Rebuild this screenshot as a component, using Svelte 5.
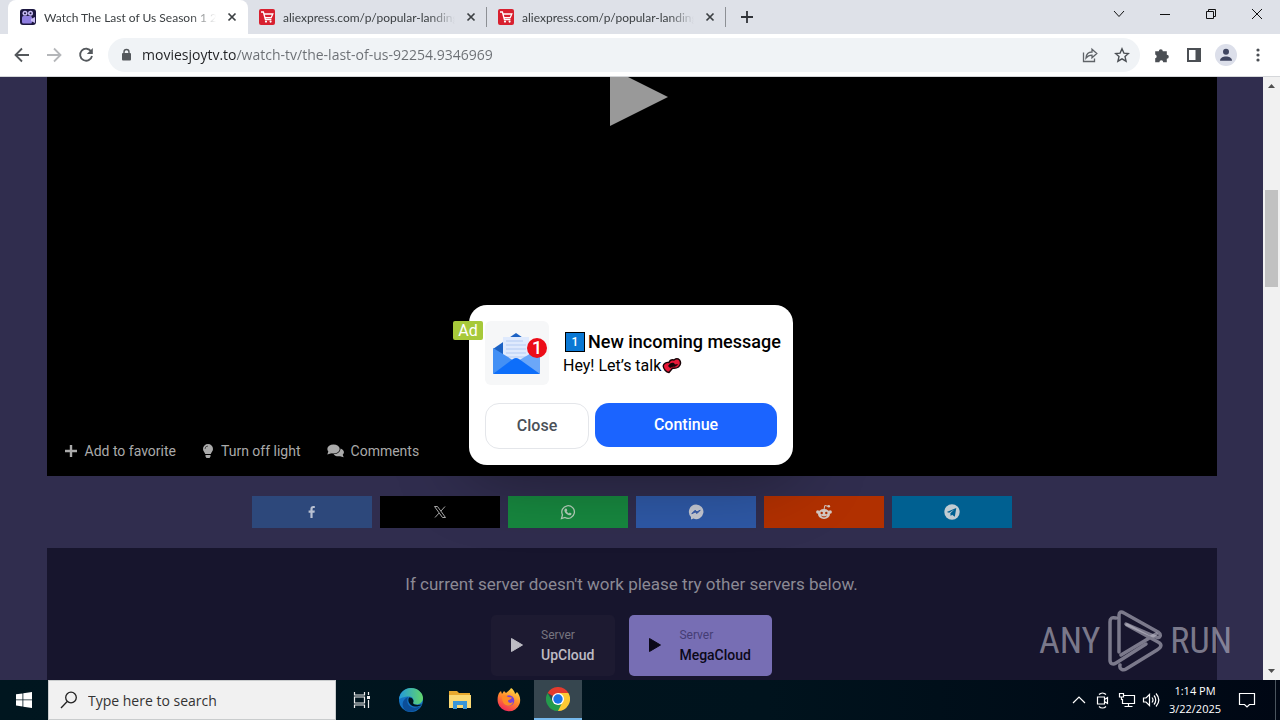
<script>
  const tabs = [
    { title: 'Watch The Last of Us Season 1 2023', icon: 'movie', active: true },
    { title: 'aliexpress.com/p/popular-landing', icon: 'cart', active: false },
    { title: 'aliexpress.com/p/popular-landing', icon: 'cart', active: false }
  ];
  const shares = ['facebook', 'x', 'whatsapp', 'messenger', 'reddit', 'telegram'];
  const servers = [
    { name: 'UpCloud', active: false },
    { name: 'MegaCloud', active: true }
  ];
  let url = 'moviesjoytv.to/watch-tv/the-last-of-us-92254.9346969';
</script>

<div class="screen">
  <header class="tabstrip">
    {#each tabs as tab}
      <div class="tab" class:active={tab.active}>
        {#if tab.icon === 'movie'}
          <svg class="fav" viewBox="0 0 16 16" aria-hidden="true">
            <rect width="16" height="16" rx="3" fill="#1c1740" />
            <circle cx="5" cy="4.200" r="2.500" fill="#c9bdf5" /><circle cx="10.500" cy="4.200" r="2.500" fill="#c9bdf5" />
            <circle cx="5" cy="4.200" r="1" fill="#1c1740" /><circle cx="10.500" cy="4.200" r="1" fill="#1c1740" />
            <rect x="2" y="7" width="10" height="7.500" rx="1.500" fill="#8f7ee0" />
            <path d="M11 10l4-2v6l-4-2z" fill="#c9bdf5" />
          </svg>
        {:else}
          <svg class="fav" viewBox="0 0 16 16" aria-hidden="true">
            <rect width="16" height="16" rx="2" fill="#d8202f" />
            <path d="M2 3h2.400l2 7.500h6M4.800 5h9l-1.600 3.700H6" fill="none" stroke="#fff" stroke-width="1.300" />
            <circle cx="7" cy="12.600" r="1.100" fill="#fff" /><circle cx="11.600" cy="12.600" r="1.100" fill="#fff" />
          </svg>
        {/if}
        <span class="title">{tab.title}</span>
        <button class="plain close" aria-label="Close tab">
          <svg width="16" height="16" viewBox="0 0 16 16"><path d="M4.500 4.500l7 7M11.500 4.500l-7 7" stroke="#3c4043" stroke-width="1.700" /></svg>
        </button>
      </div>
    {/each}
    <button class="plain newtab" aria-label="New tab">
      <svg width="16" height="16" viewBox="0 0 16 16"><path d="M8 2v12M2 8h12" stroke="#303338" stroke-width="1.800" /></svg>
    </button>
    <div class="winctl">
      <button class="plain" aria-label="Search tabs"><svg width="12" height="12" viewBox="0 0 12 12"><path d="M1 3l5 5.500L11 3" /></svg></button>
      <button class="plain" aria-label="Minimize"><svg width="12" height="12" viewBox="0 0 12 12"><path d="M1 6.500h10" /></svg></button>
      <button class="plain" aria-label="Restore"><svg width="12" height="12" viewBox="0 0 12 12"><path d="M1.500 3.500h7v7h-7zM3.500 3.500v-2h7v7h-2" /></svg></button>
      <button class="plain" aria-label="Close window"><svg width="12" height="12" viewBox="0 0 12 12"><path d="M1 1l10 10M11 1L1 11" /></svg></button>
    </div>
  </header>

  <nav class="toolbar">
    <div class="group">
      <button class="plain tool" aria-label="Back"><svg width="16" height="16" viewBox="0 0 16 16"><path d="M15 8H2M8 1.500L1.500 8 8 14.500" fill="none" stroke="#54585c" stroke-width="1.800" /></svg></button>
      <button class="plain tool" aria-label="Forward"><svg width="16" height="16" viewBox="0 0 16 16"><path d="M1 8h13M8 1.500L14.500 8 8 14.500" fill="none" stroke="#b5b7ba" stroke-width="1.800" /></svg></button>
      <button class="plain tool" aria-label="Reload"><svg width="16" height="16" viewBox="0 0 16 16"><path d="M13.200 4.500A6 6 0 1 0 14 9" fill="none" stroke="#54585c" stroke-width="1.800" /><path d="M14.800 1v6h-6z" fill="#54585c" /></svg></button>
    </div>
    <div class="omnibox">
      <svg class="lock" width="12" height="14" viewBox="0 0 12 14" aria-hidden="true"><rect x="2" y="5" width="9" height="7.500" rx="1" fill="#54585c" /><path d="M4 6V4a2.500 2.500 0 0 1 5 0v2" fill="none" stroke="#54585c" stroke-width="1.400" /></svg>
      <input class="url" type="text" bind:value={url} aria-label="Address" spellcheck="false" />
      <button class="plain tool" aria-label="Share"><svg width="16" height="16" viewBox="0 0 16 16" fill="none" stroke="#5f6368" stroke-width="1.300"><path d="M1.500 5.500v9h11v-3" /><path d="M4 11c.300-4 2.500-6 6-6V2.300l4.800 4.200-4.800 4.200V8.200C7.500 8.200 5.600 9 4 11z" /></svg></button>
      <button class="plain tool" aria-label="Bookmark"><svg width="16" height="16" viewBox="0 0 16 16"><path d="M8 1.800l1.900 4.300 4.600.400-3.500 3.100 1.100 4.600L8 11.800l-4.100 2.400L5 9.600 1.500 6.500l4.600-.400z" fill="none" stroke="#4b4f54" stroke-width="1.400" /></svg></button>
    </div>
    <div class="group">
      <button class="plain tool" aria-label="Extensions"><svg width="16" height="16" viewBox="0 0 16 16"><path d="M1.200 4.200h3.600a2 2 0 1 1 4 0h4v3.600a2 2 0 1 1 0 4v3.400H9.200a1.900 1.900 0 0 0-3.800 0H1.200v-3.900a1.900 1.900 0 0 0 0-3.700z" fill="#4b4f54" /></svg></button>
      <button class="plain tool" aria-label="Side panel"><svg width="16" height="16" viewBox="0 0 16 16"><path d="M1 1h14v14H1zM3 3v10h6.500V3z" fill="#4b4f54" fill-rule="evenodd" /></svg></button>
      <button class="plain tool" aria-label="Profile"><svg width="22" height="22" viewBox="0 0 22 22"><circle cx="11" cy="11" r="11" fill="#dcdfea" /><circle cx="11" cy="7.800" r="3" fill="#3f4560" /><path d="M5 16.800c0-5.600 12-5.600 12 0z" fill="#3f4560" /></svg></button>
      <button class="plain tool" aria-label="Menu"><svg width="16" height="16" viewBox="0 0 16 16" fill="#4b4f54"><circle cx="8" cy="3" r="1.600" /><circle cx="8" cy="8" r="1.600" /><circle cx="8" cy="13" r="1.600" /></svg></button>
    </div>
  </nav>

  <div class="viewport">
    <main class="page">
      <section class="player">
        <button class="plain bigplay" aria-label="Play">
          <svg width="72" height="50" viewBox="0 0 72 50"><path d="M14 0h18l40 20-58 29z" fill="#999" /></svg>
        </button>
        <div class="controls">
          <button class="plain"><svg width="14" height="14" viewBox="0 0 14 14"><path d="M7 1v12M1 7h12" stroke="#aaa" stroke-width="2.400" /></svg>Add to favorite</button>
          <button class="plain"><svg width="12" height="14" viewBox="0 0 12 14" fill="#aaa"><path d="M6 0a5 5 0 0 1 5 5c0 2.200-1.600 3-2.200 5H3.200C2.600 8 1 7.200 1 5a5 5 0 0 1 5-5zM3.500 11h5v1.500L7.500 14h-3l-1-1.500z" /><path d="M3 5a3 3 0 0 1 3-3" fill="none" stroke="#333" stroke-width=".800" /></svg>Turn off light</button>
          <button class="plain"><svg width="17" height="14" viewBox="0 0 17 14" fill="#aaa"><ellipse cx="6.500" cy="5" rx="6.200" ry="4.600" /><path d="M1.500 7L.300 10.600l4.200-1.400zM13.500 4.500c4 1.600 4.200 4.500 2.200 6.200l1 2.600-3.600-1.100c-3.200.500-5.600-.300-6.500-1.900 4-.200 6.900-2.600 6.900-5.800z" /></svg>Comments</button>
        </div>
      </section>

      <section class="shares">
        {#each shares as s}
          <a class={s} href="#{s}" aria-label={s}>
            <svg width="16" height="16" viewBox="0 0 16 16" aria-hidden="true">
              {#if s === 'facebook'}
                <path d="M6.400 14V8.800H4.600V6.600h1.800V5c0-2 1.100-3 2.900-3l1.500.1v1.900H9.700c-.900 0-1.100.400-1.100 1.100v1.500h2.200l-.3 2.200H8.600V14z" fill="#b9c1d2" />
              {:else if s === 'x'}
                <path d="M2.500 2.500h3l8 11h-3zM13 2.500L8.900 7.100M7 9.100l-4 4.400" fill="none" stroke="#aaa" stroke-width="1" />
              {:else if s === 'whatsapp'}
                <path d="M1.500 14.500l1-3.600a6.300 6.300 0 1 1 2.500 2.600z" fill="none" stroke="#b4ceb9" stroke-width="1.300" />
                <path d="M5.500 4.500l1.200.2.600 1.700-.7.900c.5 1 1.300 1.700 2.300 2.200l.9-.9 1.700.8c.1 1.500-1.200 2.200-2.500 1.800-2.400-.7-4.200-2.500-4.600-4.400-.1-.9.300-1.800 1.100-2.300z" fill="#b4ceb9" />
              {:else if s === 'messenger'}
                <path d="M8 .500a7.300 7.300 0 1 1-2.500 14.100L3 15.500V12.900A7.300 7.300 0 0 1 8 .500z" fill="#c5c8d2" />
                <path d="M3.800 9.700L7 6.300l2 1.600 3.200-1.700L9 9.500 7.200 8z" fill="#385ba9" stroke="#385ba9" />
              {:else if s === 'reddit'}
                <ellipse cx="8" cy="10" rx="6" ry="5" fill="#d3c8c2" /><circle cx="1.800" cy="8" r="1.700" fill="#d3c8c2" /><circle cx="14.200" cy="8" r="1.700" fill="#d3c8c2" />
                <path d="M8 5.500l.8-4 3.500.8" fill="none" stroke="#d3c8c2" /><circle cx="12.800" cy="2.300" r="1.300" fill="#d3c8c2" />
                <circle cx="5.700" cy="9" r="1.200" fill="#b13000" /><circle cx="10.300" cy="9" r="1.200" fill="#b13000" /><path d="M5.500 12c1.500 1.200 3.500 1.200 5 0" fill="none" stroke="#b13000" />
              {:else}
                <circle cx="8" cy="8" r="7.700" fill="#c2ccd2" /><path d="M2.800 7.900l9.500-4-1.500 8.800-2.700-2-1.400 1.400-.4-2.800 4-3.700-5.200 3.200z" fill="#006091" />
              {/if}
            </svg>
          </a>
        {/each}
      </section>

      <section class="servers">
        <p>If current server doesn't work please try other servers below.</p>
        <div class="list">
          {#each servers as server}
            <button class="plain server" class:on={server.active}>
              <svg width="14" height="16" viewBox="0 0 14 16"><path d="M1.500 1.500l11 6.500-11 6.500z" fill="currentColor" stroke="currentColor" stroke-linejoin="round" /></svg>
              <span class="label"><small>Server</small><b>{server.name}</b></span>
            </button>
          {/each}
        </div>
      </section>
    </main>

    <div class="scrollbar">
      <svg width="17" height="17" viewBox="0 0 17 17"><path d="M5 11l3.500-4 3.500 4z" fill="#505050" /></svg>
      <div class="track"><div class="thumb"></div></div>
      <svg width="17" height="17" viewBox="0 0 17 17"><path d="M5 6l3.500 4L12 6z" fill="#505050" /></svg>
    </div>

    <div class="watermark">
      <span>ANY</span>
      <svg width="56" height="62" viewBox="0 0 56 62" fill="none" stroke="currentColor" stroke-width="3.500" stroke-linejoin="round" stroke-linecap="round">
        <path d="M9 8C5 7 3 8 3 12v38c0 4 3 5 6 3l30-19" />
        <path d="M12 42V5c0-3 2-4 5-2l34 19c4 3 2 7-2 5L19 14" />
        <path d="M14 45L49 24M13 55c-1 4 3 6 6 4l31-19c5-3 5-6 1-8L20 15" />
      </svg>
      <span>RUN</span>
    </div>

    <div class="overlay">
      <div class="dialog" role="dialog" aria-label="New incoming message">
        <span class="ad">Ad</span>
        <div class="message">
          <svg class="mail" width="64" height="64" viewBox="0 0 64 64" aria-hidden="true">
            <rect width="64" height="64" rx="6" fill="#f6f7f8" />
            <path d="M8 28L31 12l23 16v24H8z" fill="#1c62c4" />
            <path d="M18 16h26v28H18z" fill="#dfeafd" />
            <path d="M21 20h17M21 24h20M21 28h20M21 32h20M21 36h20" stroke="#b4cbf2" />
            <path d="M8 27l23 14-23 12z" fill="#4390f5" /><path d="M55 27L31 41l24 12z" fill="#6ba7f8" />
            <path d="M8 53l20-15q3-2 6 0l21 15z" fill="#0d6efa" />
            <circle cx="52" cy="27" r="10" fill="#ec0c18" />
            <text x="52" y="33" text-anchor="middle">1</text>
          </svg>
          <div class="copy">
            <h2><span class="keycap">1</span>New incoming message</h2>
            <p>Hey! Let’s talk<svg width="20" height="16" viewBox="0 0 20 16" aria-hidden="true">
              <path d="M7 4.500C8 2 10 1.500 12 2c2-1.500 4-1.500 5.500 0 1.500 2 1 5-1 7-1.500 1-4 1.500-6 1.200L7 14.500C4 14 1.500 11 1.200 8 1.500 5.500 4.500 4 7 4.500z" fill="#e81838" stroke="#180408" stroke-width="1.400" />
              <path d="M6 8c1.500-3 4-4 6-3l1 1.500 3-.500c-1 2-3 3-5 2.800L8 10z" fill="#180408" />
            </svg></p>
          </div>
        </div>
        <div class="actions">
          <button class="dismiss">Close</button>
          <button class="go">Continue</button>
        </div>
      </div>
    </div>
  </div>

  <footer class="taskbar">
    <button class="plain slot" aria-label="Start"><svg width="16" height="16" viewBox="0 0 16 16" fill="#fff"><path d="M0 2.300l6.500-.9v6.100H0zM7.300 1.300L16 0v7.500H7.300zM0 8.300h6.500v6.200L0 13.600zM7.300 8.300H16V16l-8.700-1.300z" /></svg></button>
    <label class="search">
      <svg width="18" height="18" viewBox="0 0 18 18" fill="none" stroke="#222" stroke-width="1.300"><circle cx="11" cy="6.500" r="5.300" /><path d="M7.200 10.500L1 17" /></svg>
      <input type="text" placeholder="Type here to search" aria-label="Type here to search" />
    </label>
    <div class="apps">
      <button class="plain slot" aria-label="Task view"><svg width="18" height="18" viewBox="0 0 18 18" fill="none" stroke="#eee" stroke-width="1.200"><path d="M1.500 1v3h10V1M1.500 17v-3h10v3M1.500 6h10v6h-10zM15.500 1v3M15.500 9v8" /><path d="M14 5h3v3h-3z" fill="#eee" stroke="none" /></svg></button>
      <button class="plain slot" aria-label="Edge">
        <svg width="24" height="24" viewBox="0 0 24 24">
          <defs><linearGradient id="edgeTop" x1="0" x2="1"><stop offset="0" stop-color="#2299dc" /><stop offset="1" stop-color="#62d66b" /></linearGradient></defs>
          <circle cx="12" cy="12" r="12" fill="#1472c4" />
          <path d="M0 11C1 4 6 0 12 0c7 0 12 5 12 10 0 4-3 6.500-7 6.500-2 0-3.500-1-3-2 1.500-3-.500-6-4-6-5 0-9 2-10 2.500z" fill="url(#edgeTop)" />
          <path d="M9 9c-3 7 3 14 13 9-5 7-14 7-17 3-3-5-1-10 4-12z" fill="#0c4e98" />
          <path d="M10 9.500c-2 4 1 8.500 6 9 2 .2 5-.300 7-2-3 .500-8 1-9-1.500 1.500-2.500-.500-6-4-5.500z" fill="#00151e" />
        </svg>
      </button>
      <button class="plain slot" aria-label="File Explorer">
        <svg width="22" height="20" viewBox="0 0 22 20"><path d="M0 1h8l2 2h11v15H0z" fill="#e8a92e" /><path d="M0 5h22v13H0z" fill="#fbd974" /><path d="M4 19v-8h14v8h-4v-4H8v4z" fill="#3a96d8" /></svg>
      </button>
      <button class="plain slot" aria-label="Firefox">
        <svg width="24" height="24" viewBox="0 0 24 24">
          <defs><linearGradient id="fox" x1=".800" y1="0" x2=".3" y2="1"><stop offset="0" stop-color="#ffe14a" /><stop offset=".5" stop-color="#ff8a2b" /><stop offset="1" stop-color="#f3245c" /></linearGradient></defs>
          <path d="M2 5l2-2 1 3 2-3 2 2c2-2 4-3 5-5 2 1 4 4 4 6l2-2c3 3 4 8 2.500 12A11.300 11.300 0 0 1 1 15C0 11 1 7 2 5z" fill="url(#fox)" />
          <circle cx="12" cy="12.500" r="5.300" fill="#7541d8" /><path d="M5 8c3-1 5 0 6 1l4 .5c-1 2-3 2-4 3 0 3 4 3 5 1 0 3-3 5-6 4-4-1-5-5-5-9.500z" fill="#ff8b25" />
        </svg>
      </button>
      <button class="plain slot current" aria-label="Chrome">
        <svg width="24" height="24" viewBox="0 0 24 24"><path d="M12 12L1.600 6A12 12 0 0 1 22.400 6z" fill="#e33b2e" /><path d="M12 12V6h10.400A12 12 0 0 1 12 24z" fill="#fcc934" /><path d="M1.600 6l5.200 9 5.200 3 3.500-1L12 24A12 12 0 0 1 1.600 6z" fill="#249b4c" /><circle cx="12" cy="12" r="6" fill="#fff" /><circle cx="12" cy="12" r="4.700" fill="#1a73e8" /></svg>
      </button>
    </div>
    <div class="tray">
      <button class="plain" aria-label="Show hidden icons"><svg width="14" height="16" viewBox="0 0 14 16"><path d="M1 11l6-6 6 6" /></svg></button>
      <button class="plain" aria-label="Meet now"><svg width="14" height="18" viewBox="0 0 14 18"><path d="M1.500 6h7v7h-7zM8.500 8.500l3-2v6l-3-2M3 3.500c2-2 5-2 7 0M3 15.500c2 2 5 2 7 0" /></svg></button>
      <button class="plain" aria-label="Network"><svg width="18" height="16" viewBox="0 0 18 16"><path d="M6 3.500h10.500v8H4.500V7M10.500 11.500v3M6.500 14.500h8M1.500 1.500h4v3.500h-4zM3.500 5v3" /></svg></button>
      <button class="plain" aria-label="Volume"><svg width="18" height="16" viewBox="0 0 18 16"><path d="M1.500 6v4h2.500l3.500 3.500v-11L4 6zM10 5.500c1.200 1.500 1.200 3.500 0 5M12 3.500c2.300 2.500 2.300 6.500 0 9M14 1.500c3.500 4 3.500 9 0 13" /></svg></button>
      <div class="clock"><span>1:14 PM</span><span>3/22/2025</span></div>
      <button class="plain note" aria-label="Notifications"><svg width="18" height="18" viewBox="0 0 18 18"><path d="M1.500 2.500h15v11h-5L9 16l-2.500-2.500h-5z" /></svg></button>
      <span class="desktop"></span>
    </div>
  </footer>
</div>

<style>
  :global(body) { margin: 0; }
  * { box-sizing: border-box; }
  .screen { height: 100vh; display: flex; flex-direction: column; overflow: hidden; font-family: Roboto, sans-serif; }
  .plain { border: 0; padding: 0; background: none; color: inherit; font: inherit; display: flex; align-items: center; justify-content: center; }
  svg { flex: none; display: block; }

  .tabstrip { flex: none; height: 34px; display: flex; background: #dee1e8; padding-left: 8px; font: 12px Lato, sans-serif; color: #3c4043; }
  .tab { flex: 0 1 239px; min-width: 0; display: flex; align-items: center; gap: 8px; padding: 0 8px 0 11px; }
  .tab:not(.active) { background: linear-gradient(#8d9095, #8d9095) right center / 1px 20px no-repeat; }
  .tab.active { flex-basis: 240px; padding-left: 12px; background: #fff; border-radius: 8px 8px 0 0; }
  .fav { width: 16px; height: 16px; }
  .title { flex: 1; min-width: 0; overflow: hidden; white-space: nowrap; mask-image: linear-gradient(90deg, #000 85%, transparent); }
  .close { width: 16px; height: 16px; }
  .newtab { width: 42px; }
  .winctl { margin-left: auto; display: flex; }
  .winctl button { width: 46px; height: 28px; }
  .winctl svg { fill: none; stroke: #111; stroke-width: 1; }

  .toolbar { flex: none; height: 43px; padding: 4px 6px; display: flex; gap: 6px; background: #fff; border-bottom: 1px solid #d5d7da; }
  .group { display: flex; }
  .tool { width: 32px; height: 34px; }
  .omnibox { flex: 1; min-width: 0; height: 34px; display: flex; align-items: center; padding: 0 2px 0 12px; border-radius: 17px; background: #f0f3f6; }
  .lock { margin-right: 10px; }
  .url { flex: 1; min-width: 0; border: 0; padding: 0 0 2px; outline: 0; font: 14px "Open Sans", sans-serif; color: transparent; background: linear-gradient(90deg, #202124 94px, #6a6e73 94px); background-clip: text; }

  .viewport { flex: 1; min-height: 0; position: relative; display: flex; }
  .page { flex: 1; min-width: 0; display: flex; flex-direction: column; background: #302d4e; overflow: hidden; }
  .player { flex: 1; width: calc(100% - 93px); max-width: 1170px; margin: 0 auto; background: #000; display: flex; flex-direction: column; align-items: center; justify-content: space-between; }
  .controls { align-self: stretch; display: flex; gap: 26px; padding: 0 17px 15px; font-size: 14px; line-height: 20px; color: #aaa; }
  .controls button { gap: 7px; }
  .shares { flex: none; display: flex; justify-content: center; gap: 8px; padding: 20px 0; }
  .shares a { width: 120px; height: 32px; display: flex; align-items: center; justify-content: center; }
  .facebook { background: #2d487b; }
  .x { background: #000; }
  .whatsapp { background: #17873f; }
  .messenger { background: #2e58a5; }
  .reddit { background: #b13000; }
  .telegram { background: #006091; }
  .servers { flex: none; width: calc(100% - 93px); max-width: 1170px; margin: 0 auto; padding: 24px 0 4px; background: #17152d; }
  .servers p { margin: 0 0 19px; text-align: center; font-size: 17px; line-height: 24px; color: #8b8994; }
  .list { display: flex; justify-content: center; gap: 14px; }
  .server { gap: 17px; padding: 0 21px 2px 19px; height: 61px; border-radius: 5px; background: #1d1a31; color: #bdbcc4; }
  .server.on { background: #776eb4; color: #0b0818; }
  .label { display: flex; flex-direction: column; align-items: flex-start; }
  .label small { font-size: 12px; line-height: 20px; color: #77757f; }
  .on .label small { color: #453d75; }
  .label b { font-size: 14px; line-height: 20px; font-weight: 500; }

  .scrollbar { flex: none; width: 17px; display: flex; flex-direction: column; background: #f1f1f1; }
  .track { flex: 1; padding: 96px 2px 0; }
  .thumb { height: 97px; background: #c1c1c1; }

  .watermark { position: absolute; right: 48px; bottom: 8px; display: flex; align-items: center; gap: 7px; color: rgba(190, 188, 202, .6); font: 36px "Roboto Condensed", "Liberation Sans Narrow", sans-serif; }

  .overlay { position: absolute; inset: 0 18px 0 0; padding-top: 13px; display: flex; align-items: center; justify-content: center; pointer-events: none; }
  .dialog { position: relative; width: 324px; padding: 16px; border-radius: 18px; background: #fff; box-shadow: 0 8px 72px rgba(0, 0, 0, .4); pointer-events: auto; }
  .ad { position: absolute; left: -16px; top: 16px; width: 30px; border-radius: 2px; background: #a7c93a; color: #fff; font-size: 16px; line-height: 19px; text-align: center; }
  .message { display: flex; gap: 14px; }
  .mail text { font: 500 18px Roboto, sans-serif; fill: #fff; }
  .copy { padding-top: 9px; color: #000; white-space: nowrap; }
  h2 { margin: 0; display: flex; align-items: center; gap: 3px; font-size: 18px; line-height: 24px; font-weight: 500; }
  .keycap { width: 20px; height: 20px; margin-left: 2px; border: 1px solid #000; background: #0a78d4; color: #fff; font-size: 12px; line-height: 18px; text-align: center; }
  .copy p { margin: 0; display: flex; align-items: center; gap: 1px; font-size: 16px; line-height: 24px; }
  .actions { display: flex; align-items: flex-start; gap: 6px; margin-top: 18px; }
  .actions button { padding: 0 0 2px; border-radius: 14px; font: 500 16px Roboto, sans-serif; }
  .dismiss { width: 104px; height: 46px; border: 1px solid #e4e6ea; background: #fff; color: #4a5058; }
  .go { flex: 1; height: 44px; border: 0; background: #1b64ff; color: #fff; }

  .taskbar { flex: none; height: 40px; display: flex; background: linear-gradient(90deg, #00161f, #00131d 60%, #000714); color: #fff; font: 11px "Open Sans", sans-serif; }
  .slot { width: 48px; height: 40px; }
  .search { width: 288px; display: flex; align-items: center; gap: 10px; padding: 0 11px; background: #f1f1f1; border: 1px solid #c9cccd; }
  .search input { flex: 1; min-width: 0; border: 0; padding: 0; outline: 0; background: none; font: 14px "Open Sans", sans-serif; color: #222; }
  .search input::placeholder { color: #333; opacity: 1; }
  .apps { display: flex; gap: 1px; margin-left: 2px; }
  .current { background: #36464f; border-bottom: 2px solid #76b9ed; }
  .tray { margin-left: auto; display: flex; align-items: center; }
  .tray button { width: 24px; height: 40px; }
  .tray svg { fill: none; stroke: #fff; stroke-width: 1.200px; }
  .clock { width: 64px; display: flex; flex-direction: column; align-items: center; line-height: 18px; }
  .tray .note { width: 40px; margin-right: 8px; }
  .desktop { width: 5px; height: 40px; border-left: 1px solid #4a545e; }
</style>
